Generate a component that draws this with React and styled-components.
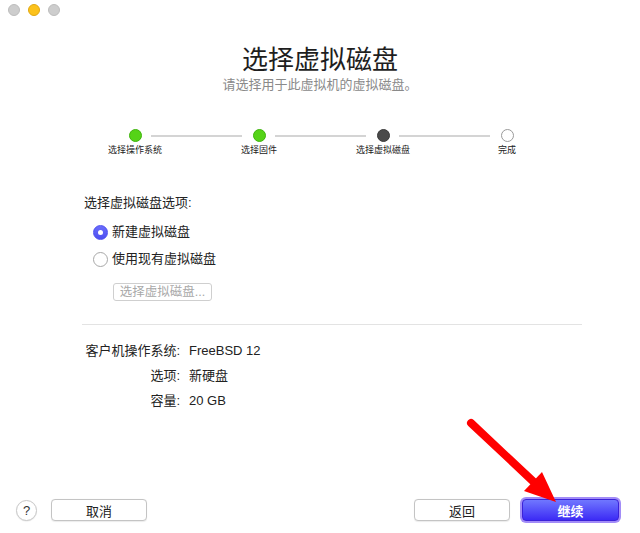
import React from "react";
import styled, { createGlobalStyle } from "styled-components";

const Global = createGlobalStyle`
  html, body { margin: 0; padding: 0; background: #ffffff; }
  body { font-family: "Liberation Sans", "Noto Sans CJK SC", sans-serif; color: #222; }
`;

const Window = styled.div`
  position: relative;
  width: 640px;
  height: 533px;
  background: #ffffff;
  display: flex;
  flex-direction: column;
  overflow: hidden;
`;

const TitleBar = styled.div`
  height: 20px;
  display: flex;
  align-items: center;
  gap: 8px;
  padding: 0 0 0 8px;
`;

const Light = styled.span`
  width: 12px;
  height: 12px;
  border-radius: 50%;
  background: ${(p) => p.$c};
  box-sizing: border-box;
  border: 0.5px solid ${(p) => p.$b};
`;

const Header = styled.div`
  display: flex;
  flex-direction: column;
  align-items: center;
  margin-top: 23px;
`;

const Title = styled.h1`
  margin: 0;
  font-size: 26px;
  line-height: 34px;
  font-weight: 400;
  color: #1e1e1e;
`;

const Subtitle = styled.div`
  font-size: 13px;
  line-height: 16px;
  color: #8a8a8a;
  margin-top: 0px;
`;

const Steps = styled.div`
  display: grid;
  grid-template-columns: repeat(4, 124px);
  margin: 36px 0 0 73px;
`;

const Step = styled.div`
  position: relative;
  display: flex;
  flex-direction: column;
  align-items: center;
  gap: 2px;
  &::after {
    content: "";
    display: ${(p) => (p.$last ? "none" : "block")};
    position: absolute;
    top: 6px;
    left: calc(50% + 16px);
    width: 91px;
    height: 2px;
    background: #d4d4d4;
  }
`;

const Dot = styled.span`
  width: 13px;
  height: 13px;
  border-radius: 50%;
  box-sizing: border-box;
  background: ${(p) =>
    p.$state === "done" ? "#55d317" : p.$state === "current" ? "#4a4a4a" : "#ffffff"};
  border: 1px solid
    ${(p) =>
      p.$state === "done" ? "#3fb40d" : p.$state === "current" ? "#3a3a3a" : "#9a9a9a"};
`;

const StepLabel = styled.span`
  font-size: 9px;
  line-height: 12px;
  color: #222;
`;

const Content = styled.div`
  display: flex;
  flex-direction: column;
  margin: 38px 0 0 84px;
`;

const Prompt = styled.div`
  font-size: 13px;
  line-height: 18px;
`;

const RadioGroup = styled.div`
  display: flex;
  flex-direction: column;
  gap: 9px;
  margin: 11px 0 0 9px;
`;

const RadioRow = styled.label`
  display: flex;
  align-items: center;
  gap: 4px;
  font-size: 13px;
  line-height: 18px;
`;

const RadioMark = styled.span`
  width: 15px;
  height: 15px;
  border-radius: 50%;
  box-sizing: border-box;
  display: flex;
  align-items: center;
  justify-content: center;
  background: ${(p) => (p.$on ? "linear-gradient(#6b6dfb, #4d4ff0)" : "#fff")};
  border: 1px solid ${(p) => (p.$on ? "#4d4ff0" : "#a8a8a8")};
  &::after {
    content: "";
    display: ${(p) => (p.$on ? "block" : "none")};
    width: 5px;
    height: 5px;
    border-radius: 50%;
    background: #fff;
  }
`;

const DisabledButton = styled.button`
  align-self: flex-start;
  margin: 15px 0 0 29px;
  height: 18px;
  width: 99px;
  padding: 0;
  font-family: inherit;
  font-size: 12.5px;
  line-height: 16px;
  color: #a8a8a8;
  background: #fff;
  border: 1px solid #cfcfcf;
  border-radius: 3px;
`;

const Separator = styled.div`
  height: 1px;
  background: #e3e3e3;
  margin: 23px 58px 0 82px;
`;

const Summary = styled.div`
  display: grid;
  grid-template-columns: 95px auto;
  column-gap: 9px;
  row-gap: 7px;
  margin: 17px 0 0 85px;
  font-size: 13px;
  line-height: 18px;
`;

const Key = styled.span`
  text-align: right;
`;

const Val = styled.span``;

const Spacer = styled.div`
  flex: 1;
`;

const Footer = styled.div`
  display: flex;
  align-items: center;
  padding: 0 19px 10px 16px;
  height: 26px;
`;

const Help = styled.button`
  width: 21px;
  height: 21px;
  border-radius: 50%;
  border: 1px solid #c8c8c8;
  background: #fff;
  font-family: inherit;
  font-size: 13px;
  padding: 0;
  color: #333;
  box-shadow: 0 0.5px 1px rgba(0, 0, 0, 0.1);
`;

const PushButton = styled.button`
  width: 96px;
  height: 22px;
  padding: 0;
  border-radius: 4px;
  font-family: inherit;
  font-size: 13px;
  color: #222;
  background: #fff;
  border: 1px solid #c4c4c4;
  box-shadow: 0 0.5px 1px rgba(0, 0, 0, 0.08);
  margin-left: ${(p) => p.$ml || 0}px;
`;

const PrimaryButton = styled.button`
  width: 101px;
  height: 26px;
  padding: 2px;
  margin-left: 10px;
  border-radius: 6px;
  border: none;
  background: #a28cf7;
  display: flex;
  box-sizing: border-box;
  font-family: inherit;
`;

const PrimaryInner = styled.span`
  flex: 1;
  border-radius: 4px;
  background: linear-gradient(#7077ff, #3c2bf5);
  border: 1px solid #3b22d8;
  color: #fff;
  font-size: 13px;
  font-weight: 700;
  display: flex;
  align-items: center;
  justify-content: center;
`;

const ArrowLayer = styled.svg`
  position: absolute;
  left: 0;
  top: 0;
  pointer-events: none;
`;

export default function App() {
  const steps = [
    { label: "选择操作系统", state: "done" },
    { label: "选择固件", state: "done" },
    { label: "选择虚拟磁盘", state: "current" },
    { label: "完成", state: "todo" },
  ];
  return (
    <>
      <Global />
      <Window>
        <TitleBar>
          <Light $c="#cdcdcd" $b="#bdbdbd" />
          <Light $c="#fcc21b" $b="#e0a812" />
          <Light $c="#cdcdcd" $b="#bdbdbd" />
        </TitleBar>
        <Header>
          <Title>选择虚拟磁盘</Title>
          <Subtitle>请选择用于此虚拟机的虚拟磁盘。</Subtitle>
        </Header>
        <Steps>
          {steps.map((s, i) => (
            <Step key={s.label} $last={i === steps.length - 1}>
              <Dot $state={s.state} />
              <StepLabel>{s.label}</StepLabel>
            </Step>
          ))}
        </Steps>
        <Content>
          <Prompt>选择虚拟磁盘选项:</Prompt>
          <RadioGroup>
            <RadioRow>
              <RadioMark $on />
              新建虚拟磁盘
            </RadioRow>
            <RadioRow>
              <RadioMark />
              使用现有虚拟磁盘
            </RadioRow>
          </RadioGroup>
          <DisabledButton disabled>选择虚拟磁盘...</DisabledButton>
        </Content>
        <Separator />
        <Summary>
          <Key>客户机操作系统:</Key>
          <Val>FreeBSD 12</Val>
          <Key>选项:</Key>
          <Val>新硬盘</Val>
          <Key>容量:</Key>
          <Val>20 GB</Val>
        </Summary>
        <Spacer />
        <Footer>
          <Help>?</Help>
          <PushButton $ml={14}>取消</PushButton>
          <Spacer />
          <PushButton>返回</PushButton>
          <PrimaryButton>
            <PrimaryInner>继续</PrimaryInner>
          </PrimaryButton>
        </Footer>
        <ArrowLayer width="640" height="533" viewBox="0 0 640 533">
          <line x1="471" y1="423" x2="537" y2="485" stroke="#ff0000" strokeWidth="8" strokeLinecap="round" />
          <polygon points="556,502 524,491 542,472" fill="#ff0000" />
        </ArrowLayer>
      </Window>
    </>
  );
}
